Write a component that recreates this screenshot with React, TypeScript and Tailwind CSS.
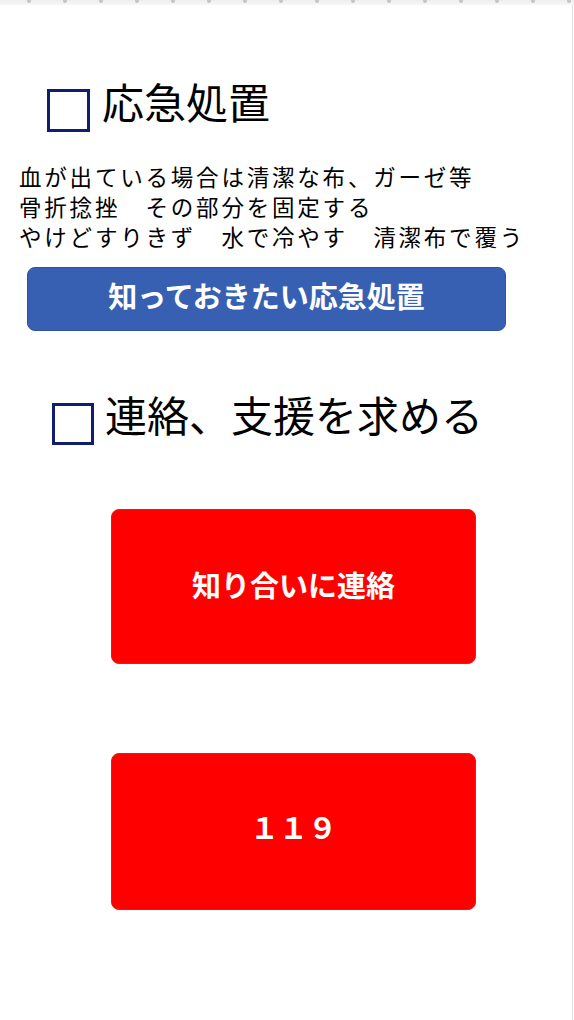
import React from "react";

const jp = { fontFamily: '"Noto Sans CJK JP", "Noto Sans", sans-serif' };

function Box({ className }: { className: string }) {
  return <div className={`shrink-0 border-[3px] border-[#0f1e6e] bg-white ${className}`} />;
}

export default function App() {
  const dots = Array.from({ length: 16 }, (_, i) => i);
  return (
    <div className="w-[574px] min-h-[1020px] bg-white text-black" style={jp}>
      <div className="h-[5px] w-full bg-gradient-to-b from-[#eeeeee] to-[#f7f7f7] flex pl-[27px] gap-[32px]">
        {dots.map((d) => (
          <div key={d} className="w-[4px] h-[4px] rounded-full bg-[#c6c6c6] -mt-[1px]" />
        ))}
      </div>
      <div className="flex min-h-[1015px]">
        <div className="w-[572px] flex flex-col">
          <div className="mt-[72px] flex items-start pl-[47px] gap-[12px]">
            <Box className="mt-[12px] w-[43px] h-[43px]" />
            <div className="text-[42px] leading-[48px]">応急処置</div>
          </div>
          <div className="mt-[29px] pl-[19px] text-[22.5px] leading-[30px] tracking-[2.8px]">
            <div>血が出ている場合は清潔な布、ガーゼ等</div>
            <div>骨折捻挫　その部分を固定する</div>
            <div>やけどすりきず　水で冷やす　清潔布で覆う</div>
          </div>
          <div className="mt-[16px] ml-[27px] w-[479px] h-[64px] rounded-[8px] bg-[#3860b2] border border-[#2f53a0] flex items-center justify-center pb-[6px] text-white font-bold text-[29px]">
            知っておきたい応急処置
          </div>
          <div className="mt-[59px] flex items-start pl-[52px] gap-[11px]">
            <Box className="mt-[13px] w-[42px] h-[42px]" />
            <div className="text-[42px] leading-[48px]">連絡、支援を求める</div>
          </div>
          <div className="mt-[64px] ml-[111px] w-[365px] h-[155px] rounded-[8px] bg-[#ff0000] border border-[#e81a1a] flex items-center justify-center pb-[3px] text-white font-bold text-[29px]">
            知り合いに連絡
          </div>
          <div className="mt-[89px] ml-[111px] w-[365px] h-[157px] rounded-[8px] bg-[#ff0000] border border-[#e81a1a] flex items-center justify-center pb-[9px] text-white font-bold text-[29px]">
            １１９
          </div>
        </div>
        <div className="w-[1px] bg-[#e2e2e2]" />
        <div className="w-[1px] bg-white" />
      </div>
    </div>
  );
}
